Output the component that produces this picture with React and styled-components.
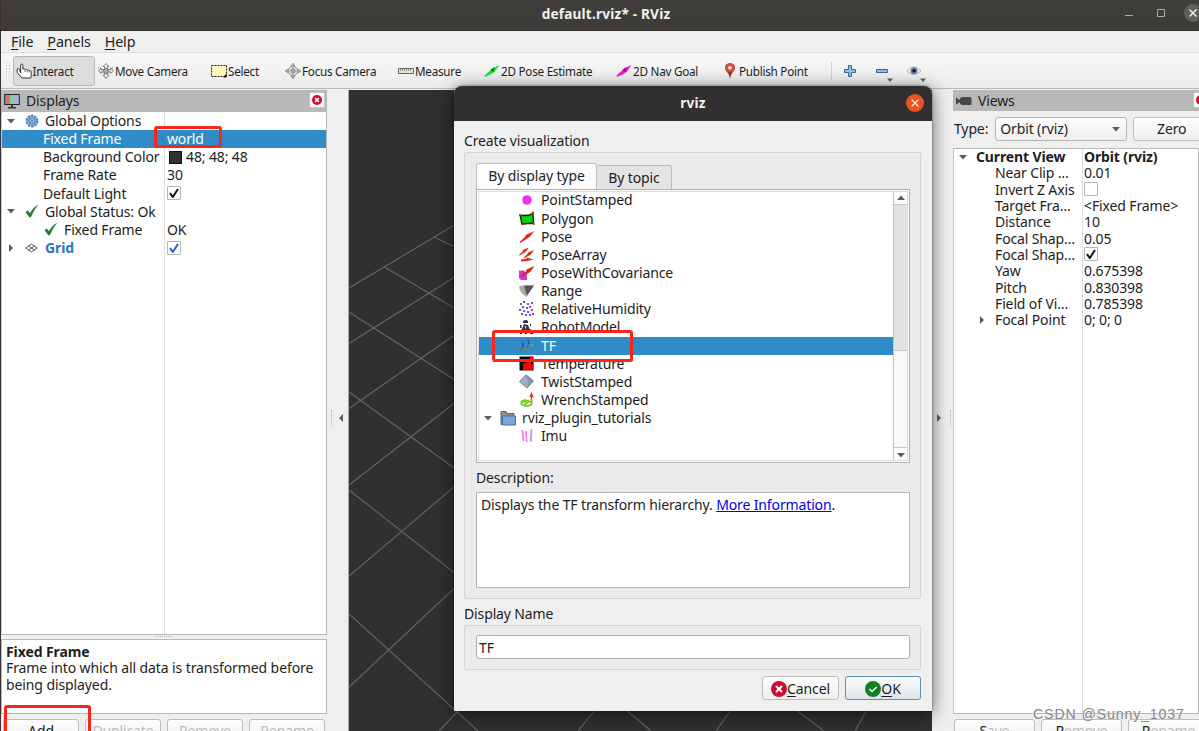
import React from 'react';
import styled, { createGlobalStyle } from 'styled-components';

const Global = createGlobalStyle`
  *{box-sizing:border-box}
  body{margin:0;overflow:hidden;background:#efefef}
  svg{display:block;flex:none}
`;

const Window = styled.div`
  position:relative;width:1199px;height:731px;overflow:hidden;display:flex;flex-direction:column;
  background:#efefef;color:#1d1d1d;font-family:"Noto Sans","Open Sans",sans-serif;font-size:14px;line-height:16px;letter-spacing:-0.13px;white-space:nowrap;
  border-left:1px solid #3a3038;
`;
const TitleBar = styled.div`
  height:31px;flex:none;background:linear-gradient(#413f3c,#3d3b38);border-bottom:1px solid #2f2d2b;display:grid;grid-template-columns:130px 1fr 118px;align-items:center;padding-bottom:3px;
  color:#f2f1ef;font-weight:700;font-size:13.6px;text-align:center;letter-spacing:.2px;
`;
const WindowButtons = styled.div`display:flex;justify-content:flex-end;margin-right:-4px;padding-bottom:1px;`;
const MenuBar = styled.div`
  height:22px;flex:none;display:flex;gap:14px;padding:1px 0 0 10px;align-items:center;border-bottom:1px solid #dcdcdc;font-size:14.3px;
`;
const Mnemonic = styled.span`text-decoration:underline;text-underline-offset:2px;text-decoration-thickness:1px;`;
const Toolbar = styled.div`
  height:36px;flex:none;display:flex;align-items:center;background:linear-gradient(#f8f8f8,#ececec);border-bottom:1px solid #b9b9b9;font-size:11.7px;padding-left:4px;letter-spacing:-0.25px;
`;
const Tool = styled.div`
  width:${p => p.$w}px;height:${p => (p.$on ? 30 : 28)}px;display:flex;flex:none;align-items:center;gap:${p => (p.$on ? 1 : 1.5)}px;padding-left:2.5px;
  ${p => p.$on && 'background:#dcdcdc;border:1px solid #b8b8b8;border-radius:3px;padding-left:1.5px;'}
`;
const Separator = styled.div`width:1px;height:18px;background:#d3d3d3;margin-left:${p => p.$ml || 0}px;`;
const IconTool = styled.div`width:31.5px;height:28px;display:flex;align-items:center;flex:none;margin-left:${p => p.$ml || 0}px;`;
const DropHint = styled.span`align-self:flex-end;display:flex;margin:0 0 2px -1px;`;
const Main = styled.div`flex:1;min-height:0;display:grid;grid-template-columns:326px 21px 584px 21px 246px;`;
const Dock = styled.div`display:flex;flex-direction:column;min-width:0;`;
const DockTitle = styled.div`
  height:21px;margin-top:1px;flex:none;background:#b8b8b8;display:flex;align-items:center;padding:0 2px 0 3px;gap:6px;font-size:14px;
`;
const DockClose = styled.div`
  width:16px;height:16px;border-radius:2px;border:1px solid #c8c8c8;background:#f7f7f7;margin-left:auto;margin-right:${p => p.$mr || 0}px;margin-bottom:2px;display:grid;place-items:center;flex:none;
`;
const Tree = styled.div`
  flex:none;height:${p => p.$h}px;background:linear-gradient(90deg,transparent ${p => p.$col}px,#dedede ${p => p.$col}px,#dedede ${p => p.$col + 1}px,transparent ${p => p.$col + 1}px),#fff;
  border:1px solid #b9b9b9;border-left-color:#c9c9c9;
`;
const TreeRow = styled.div`
  height:${p => p.$h}px;line-height:16px;display:grid;grid-template-columns:${p => p.$col}px 1fr;align-items:center;
  font-weight:${p => (p.$bold ? 700 : 400)};color:${p => (p.$sel ? '#fff' : '#1d1d1d')};background:${p => (p.$sel ? '#308cc6' : 'transparent')};
`;
const NameCell = styled.div`display:flex;align-items:center;padding-left:${p => p.$pad}px;color:${p => (p.$blue ? '#2a76c6' : 'inherit')};`;
const ArrowSlot = styled.span`width:${p => p.$w}px;display:flex;flex:none;margin-bottom:1px;`;
const ValueCell = styled.div`padding-left:${p => (p.$box ? 2 : 3)}px;display:flex;align-items:center;gap:4px;`;
const Swatch = styled.span`width:13px;height:13px;background:#303030;border:1px solid #111;margin-left:2px;`;
const CheckBox = styled.span`width:14px;height:14px;border:1px solid #b7b7b7;background:#fff;display:grid;place-items:center;border-radius:1px;margin-bottom:1px;`;
const Grip = styled.div`width:17px;margin:0 auto;border-bottom:1px dotted #b0b0b0;height:2px;flex:none;`;
const Help = styled.div`
  height:75px;margin-top:2px;border:1px solid #b9b9b9;background:#fff;padding:4px 4px;line-height:16.3px;flex:none;letter-spacing:-0.1px;
`;
const Buttons = styled.div`display:grid;grid-template-columns:${p => p.$cols};gap:6px;padding:${p => p.$pad};`;
const Button = styled.div`
  height:24px;border:1px solid ${p => (p.$focus ? '#5b93b5' : '#bcbcbc')};border-radius:3px;display:flex;align-items:center;justify-content:center;
  background:${p => (p.$focus ? 'linear-gradient(#fbfdfe,#dde5ea)' : 'linear-gradient(#fdfdfd,#efefef)')};color:${p => (p.$off ? '#bcbcbc' : '#1d1d1d')};
`;
const DarkLead = styled.span`color:#1d1d1d;`;
const Splitter = styled.div`
  display:flex;align-items:center;gap:${p => (p.$left ? 5 : 7)}px;padding:4px 0 0 ${p => (p.$left ? 4 : 3)}px;
`;
const Dots = styled.span`width:1px;height:16px;border-left:1px dotted #b5b5b5;`;
const Viewport = styled.div`background:#303030;overflow:hidden;border-left:1px solid #aaa;margin-top:1px;`;
const TypeRow = styled.div`display:flex;align-items:center;gap:6px;height:37px;padding:0 0 2px 1px;flex:none;`;
const Select = styled.div`
  width:132px;height:24px;flex:none;margin-left:1px;border:1px solid #b5b5b5;border-radius:3px;background:linear-gradient(#fdfdfd,#efefef);display:flex;align-items:center;justify-content:space-between;padding:0 6px 0 4px;
`;
const ZeroButton = styled(Button)`width:77px;flex:none;`;

const Dialog = styled.div`
  position:absolute;left:453px;top:86px;width:478px;height:625px;background:#efefef;border-radius:8px 8px 0 0;
  box-shadow:0 3px 18px rgba(0,0,0,.6),0 0 2px rgba(0,0,0,.6);display:flex;flex-direction:column;
`;
const DialogTitle = styled.div`
  height:35px;flex:none;background:#322f30;border-radius:8px 8px 0 0;color:#f2f1ef;font-weight:700;font-size:13.6px;letter-spacing:.2px;
  display:grid;grid-template-columns:26px 1fr 26px;align-items:center;text-align:center;padding-bottom:1px;
`;
const DialogBody = styled.div`padding:10px 11px 0 10px;display:flex;flex-direction:column;`;
const Label = styled.div`height:19px;line-height:19px;margin-top:${p => p.$mt || 0}px;margin-bottom:${p => p.$mb || 0}px;`;
const Group = styled.div`
  height:${p => p.$h}px;border:1px solid #d4d4d4;background:#ebebeb;border-radius:2px;padding:${p => p.$pt}px 10px 0 11px;margin-top:2px;display:flex;flex-direction:column;
`;
const Tabs = styled.div`display:flex;align-items:flex-end;height:26px;flex:none;`;
const Tab = styled.div`
  height:${p => (p.$on ? 26 : 24)}px;width:${p => (p.$on ? 121 : 75)}px;text-align:center;line-height:${p => (p.$on ? 24 : 23)}px;
  border:1px solid #bdbdbd;border-bottom:0;border-radius:3px 3px 0 0;background:${p => (p.$on ? '#fdfdfd' : '#e4e4e4')};${p => !p.$on && 'border-left:0;'}
`;
const ListBox = styled.div`
  height:274px;flex:none;display:flex;border:1px solid #b0b0b0;outline:1px solid #dcdcdc;outline-offset:-3px;background:#fff;padding:1px 2px 1px 1px;
`;
const List = styled.div`flex:1;padding-top:.4px;`;
const Item = styled.div`
  height:18.15px;line-height:16px;display:flex;align-items:center;padding-left:${p => p.$pad}px;gap:6px;
  background:${p => (p.$sel ? '#308cc6' : 'transparent')};color:${p => (p.$sel ? '#fff' : '#1d1d1d')};
`;
const Scroll = styled.div`width:14px;display:flex;flex-direction:column;border-left:1px solid #c4c4c4;background:#e2e2e2;`;
const ScrollEnd = styled.div`height:13px;background:#fbfbfb;display:grid;place-items:center;`;
const ScrollTrack = styled.div`height:146px;border-top:1px solid #c4c4c4;`;
const ScrollThumb = styled.div`flex:1;background:#f8f8f8;border:1px solid #c4c4c4;border-left:0;border-right:0;`;
const Description = styled.div`height:96px;border:1px solid #b5b5b5;background:#fff;padding:3px 4px;flex:none;line-height:18px;`;
const Link = styled.span`color:#0000ee;text-decoration:underline;`;
const Field = styled.div`height:24px;border:1px solid #b0b0b0;border-radius:3px;background:#fff;padding-left:2px;line-height:23px;`;
const Actions = styled.div`display:flex;justify-content:flex-end;gap:6px;margin-top:6px;`;
const ActionButton = styled(Button)`width:${p => (p.$focus ? 76 : 77)}px;padding-top:1px;`;
const Mark = styled.div`
  position:absolute;left:${p => p.$x}px;top:${p => p.$y}px;width:${p => p.$w}px;height:${p => p.$h}px;border:3px solid #fb2519;border-radius:3px;
`;
const Watermark = styled.div`
  position:absolute;left:1032px;top:705px;font:14.2px/18px "Liberation Sans",Arial,sans-serif;letter-spacing:.85px;color:#858585;text-shadow:0 0 1px #fff;
`;

const Arrow = ({ dir = 'down', size = 8 }) => (
  <svg width={size} height={size} viewBox="0 0 8 8"><path fill="#5c5c5c" d={{ down: 'M0 2h8L4 6.5z', right: 'M2 0v8l4-4z', left: 'M6 0v8L2 4z', up: 'M0 6h8L4 1.5z' }[dir]} /></svg>
);
const Check = ({ color = '#111' }) => (
  <svg width="10" height="10" viewBox="0 0 10 10"><path d="M1 5.2 3.8 9 9 1" fill="none" stroke={color} strokeWidth="2" /></svg>
);
const RoundX = ({ size = 10, bg = '#c8102e' }) => (
  <svg width={size} height={size} viewBox="0 0 16 16"><circle cx="8" cy="8" r="8" fill={bg} /><path d="m5 5 6 6m0-6-6 6" stroke="#fff" strokeWidth={size < 12 ? 2.4 : size > 16 ? 1.1 : 2} /></svg>
);
const Ico = ({ w = 16, h = 16, children }) => <svg width={w} height={h} viewBox="0 0 16 16">{children}</svg>;
const Pose = ({ c, d }) => <Ico><path d="M.5 12.500 1 14 7 11.300l3.500-2.300L15.500 2 9 5 5 8.500z" fill={c} /><path d="m6.500 7 4-3-1 5z" fill={d} /></Ico>;
const Diagonal = ({ x, y, s }) => <g transform={`translate(${x} ${y}) scale(${s})`}><path d="M0 11 5.500 6l1-2.500L15 0 10.500 6.500 8 8 .8 12.300z" fill="#e32616" /></g>;

const icons = {
  hand: <Ico><path d="M4.700 10V2.200c0-1.600 2.200-1.600 2.200 0v3.900c1.200-.6 1.800-.2 2.200.5 1-.5 1.700-.2 2.100.5 1-.4 1.800 0 2.100.7 1.300-.3 1.900.3 1.900 1.200V14q0 1-1 1H6L1.200 9.500V6.200C1.800 5 3 5.200 3.300 6.500z" fill="#fff" stroke="#333" /><path d="M9 7v2M11.200 7.400v1.800M13.200 8v1.500" stroke="#555" strokeWidth=".8" /></Ico>,
  move: <Ico><path d="m8 .5 3 3H9.500v3H13V5l2.500 2.700L13 10.300V9H9.500v3H11l-3 3.500L5 12h1.500V9H3v1.500L.5 7.800 3 5v1.500h3.500v-3H5z" fill="#e8e8e8" stroke="#808080" /><circle cx="8" cy="8" r="2.500" fill="#aaa" stroke="#777" /><path d="M0 5h4M12 5h4" stroke="#777" strokeDasharray="1 1" /></Ico>,
  select: <Ico><path d="M.5 2.500h15v11H.5z" fill="#fff7b8" stroke="#222" strokeDasharray="2 1" /><path d="m12 14.500 3.500-4v4z" fill="#111" /></Ico>,
  focus: <Ico><circle cx="8" cy="8" r="4.700" fill="#ddd" stroke="#888" /><circle cx="8" cy="8" r="2" fill="#aaa" stroke="#888" /><path d="m8 0 2 3H6zM8 16l2-3H6zM0 8l3-2v4zM16 8l-3-2v4zM8 3v3M8 10v3M3 8h3M10 8h3" fill="#aaa" stroke="#999" strokeWidth=".8" /></Ico>,
  measure: <Ico><path d="M.5 5.500h15v5H.5z" fill="#f0e6bb" stroke="#666" /><path d="M2.500 6v2M4.500 6v2M6.500 6v2M8.500 6v2M10.500 6v2M12.500 6v2" stroke="#777" strokeWidth=".8" /></Ico>,
  estimate: <Pose c="#17e43d" d="#08751c" />,
  goal: <Pose c="#f513d8" d="#8e087c" />,
  pin: <Ico><path d="M8 15.800Q7.500 12 5 9 2.800 6.300 3 4.500C3.400 1.500 5.400.2 8 .2s4.600 1.300 5 4.300q.2 1.800-2 4.500Q8.500 12 8 15.800z" fill="#94452b" /><path d="M3 4.500C3.400 1.500 5.400.2 8 .2s4.600 1.300 5 4.300q0 2-2 4H5q-2-2-2-4z" fill="#dc4c35" /><circle cx="8" cy="4.800" r="1.900" fill="#f6e9e6" /></Ico>,
  plus: <svg width="12" height="12" viewBox="0 0 12 12"><path d="M4.500.5h3v4h4v3h-4v4h-3v-4h-4v-3h4z" fill="#94bce4" stroke="#3465a4" /></svg>,
  minus: <svg width="12" height="12" viewBox="0 0 12 12"><path d="M.5 4.500h11v3H.5z" fill="#94bce4" stroke="#3465a4" /></svg>,
  eye: <Ico w={14}><path d="M0 8Q8-1.500 16 8 8 16 0 8z" fill="#f4f4f4" stroke="#aaa" /><circle cx="8" cy="7.700" r="4" fill="#6b79b3" /><circle cx="8" cy="7.700" r="2" fill="#14172e" /></Ico>,
  monitor: <svg width="16" height="16" viewBox="0 0 16 16"><path d="M.2 1h15.600v11H.2z" fill="#222" /><path d="M1.200 2H6v9H1.200z" fill="#c77" /><path d="M6 2h4v9H6z" fill="#86d186" /><path d="M10 2h4.800v9H10z" fill="#aab0ee" /><path d="M7 12h2v2h3v1.500H4V14h3z" fill="#333" /></svg>,
  camera: <svg width="16" height="10" viewBox="0 0 16 10"><path d="M0 1.500 4 4V2.500L6 1h8q1.500 0 1.500 1.500v5Q15.500 9 14 9H6L4 7.500V6L0 8.500z" fill="#484848" /></svg>,
  gear: <svg width="14" height="14" viewBox="0 0 14 14"><circle cx="7" cy="7" r="5.500" fill="#8fb3df" stroke="#4a7ebb" strokeWidth="1.800" strokeDasharray="2.400 1.050" /><circle cx="7" cy="7" r="3.200" fill="#b9d0ec" stroke="#4a7ebb" /><path d="M7 3v8M3 7h8M4 4l6 6M10 4l-6 6" stroke="#5c8cc6" strokeWidth=".7" /></svg>,
  ok: <svg width="14" height="14" viewBox="0 0 14 14"><path d="m.5 8 2.300-1.600L5 9.200Q8 3.500 13.300.5 8.800 6 5.800 13.300H4.300z" fill="#227d2b" /></svg>,
  grid: <svg width="13" height="10" viewBox="0 0 13 10"><path d="M.7 5 6.500 1l5.800 4-5.800 4zM3.500 3l6 4M9.500 3l-6 4" fill="none" stroke="#555" /></svg>,
  PointStamped: <Ico><circle cx="8" cy="8" r="4.800" fill="#f032ed" /></Ico>,
  Polygon: <Ico><path d="M1.200 4.500 10 4.300l4-2.300.5 10.500-4-.3-7.500 1z" fill="#08d408" stroke="#122b12" strokeWidth="1.400" /><path d="M0 3h2v2H0zM13 .5h2v2h-2zM2 12.500h2v1.500H2zM14 12h1.500v2H14z" fill="#f22" /></Ico>,
  Pose: <Ico><path d="M.5 13 6 8l.8-2L15.500 2 10.500 8 8.500 9.200 1.300 14z" fill="#e32616" /></Ico>,
  PoseArray: <Ico><Diagonal x={0} y={.5} s={.65} /><Diagonal x={4.500} y={3} s={.7} /><path d="m2 12.500 5-.5 1-1.500 6.500 2-6.500 1.500-6 .5z" fill="#e32616" /></Ico>,
  PoseWithCovariance: <Ico><path d="M0 5.500h5l3 3v6.500H2L0 13z" fill="#cc39cc" /><Diagonal x={2} y={1} s={.9} /></Ico>,
  Range: <Ico><path d="M0 4Q1 2 4 2.500L15 2.500 7.500 14Q1 10 0 4z" fill="#aaa" /><path d="m5 2.500 10 0L8 12.500z" fill="#555" /></Ico>,
  RelativeHumidity: <Ico>{[[2, 3], [5, 1], [9, 3], [13, 2], [4, 6], [8, 7], [11, 6], [1, 9], [5, 10], [13, 9], [9, 11], [3, 13], [7, 14], [11, 14], [14, 13]].map(([x, y]) => <circle key={`${x}-${y}`} cx={x} cy={y} r="1.100" fill="#5520ee" />)}</Ico>,
  RobotModel: <Ico><path d="M4 2q3-2 5 0v2H4z" fill="#24345d" /><path d="m5 5 4 1 1.500 4 4 1.500V15h-3l-2-2-2 2H6l-2-3-1 3H1v-3l2-2zM1 6h1.500v3H1zM11 5h1v2h-1z" fill="#333" /><path d="m5.500 7 2 .5-1 3z" fill="#ddd" /></Ico>,
  TF: <Ico><path d="m0 14 4-4" stroke="#8a5560" strokeWidth="1.500" /><path d="M4 10V4M10 7 9 1" stroke="#2949c4" strokeWidth="1.500" /><path d="m4 10 5 2M10 7h5" stroke="#26ca64" strokeWidth="1.300" /><path d="m6 12 4-5" stroke="#a55b45" strokeWidth="1.300" /></Ico>,
  Temperature: <Ico><path d="M.5.500h14v14H.5z" fill="#090909" /><path d="M4 14V8l2-1.500h2V5l4-1v5l2.500-1v6zM11 .5h3V3h-3z" fill="#f00" /></Ico>,
  TwistStamped: <Ico><path d="M7 .8 14.500 7l-6.500 7L.5 7.500z" fill="#8999b4" stroke="#63728e" strokeWidth=".8" /><path d="m1 7.500 6-6L9 8l-1 5.500z" fill="#b6c0d2" opacity=".6" /></Ico>,
  WrenchStamped: <Ico><path d="M12.500 11V3M11.200 4.500l1.300-3 1.300 3z" stroke="#e23b28" strokeWidth="1.300" fill="#e23b28" /><path d="M12.500 7v5.500Q9 15 5 13.500M2 10.500Q4 7 8 8.500t4 2" stroke="#6cc414" strokeWidth="1.600" fill="none" /><path d="M2 11q3-2.500 7-.5L5 13.500q-3 0-3-2.500z" stroke="#6cc414" strokeWidth="1.200" fill="#c4e6a0" /></Ico>,
  Imu: <Ico><path d="m3.500 2 1 11M7 3l.7 11M12.500 1l-.7 13" stroke="#ee82e8" strokeWidth="1.800" /></Ico>,
  folder: <Ico><path d="M1 14.500v-13h5l1 2h7v11z" fill="#8a9299" stroke="#5b646b" /><path d="M2.500 6h13v9h-13z" fill="#7da7d9" stroke="#3e6ea8" /></Ico>,
};

const tools = [['hand', 'Interact', 82, true], ['move', 'Move Camera', 113], ['select', 'Select', 74], ['focus', 'Focus Camera', 113], ['measure', 'Measure', 86], ['estimate', '2D Pose Estimate', 132], ['goal', '2D Nav Goal', 106], ['pin', 'Publish Point', 108]];
const displays = [
  { n: 'Global Options', icon: 'gear', arrow: 'down', pad: 5, iw: 20 },
  { n: 'Fixed Frame', v: 'world', pad: 41, sel: true },
  { n: 'Background Color', v: '48; 48; 48', pad: 41, swatch: true },
  { n: 'Frame Rate', v: '30', pad: 41 },
  { n: 'Default Light', pad: 41, check: '#111' },
  { n: 'Global Status: Ok', icon: 'ok', arrow: 'down', pad: 5, iw: 20 },
  { n: 'Fixed Frame', v: 'OK', icon: 'ok', pad: 42, iw: 20 },
  { n: 'Grid', icon: 'grid', arrow: 'right', pad: 5, iw: 20, blue: true, check: '#2a66b0' },
];
const views = [
  ['Near Clip …', '0.01'], ['Invert Z Axis', null, false], ['Target Fra…', '<Fixed Frame>'], ['Distance', '10'], ['Focal Shap…', '0.05'],
  ['Focal Shap…', null, true], ['Yaw', '0.675398'], ['Pitch', '0.830398'], ['Field of Vi…', '0.785398'],
];
const types = ['PointStamped', 'Polygon', 'Pose', 'PoseArray', 'PoseWithCovariance', 'Range', 'RelativeHumidity', 'RobotModel', 'TF', 'Temperature', 'TwistStamped', 'WrenchStamped'];

function GridLines() {
  return (
    <svg width="583" height="641" viewBox="349 90 583 641">
      <g stroke="#656565" strokeWidth="1.100">
        <path d="M349 288 461 221M349 343.500 461 273M349 408.500 461 330.500M349 485 461 398M349 576 461 481M349 687 461 582M439 731 461 708" />
        <path d="m434 237 27 13M384.500 267 461 312M349 312 461 384M349 392 461 473M349 490 461 578M349 614 478 731" />
        <path d="m578 731 17-21M626 710l25 21M716 731l15-21M796 710l28 21M855 731l12-21" />
      </g>
    </svg>
  );
}

export default function App() {
  return (
    <Window>
      <Global />
      <TitleBar>
        <span /><span>default.rviz* - RViz</span>
        <WindowButtons><svg width="78" height="20" viewBox="0 0 78 20"><path d="M0 12.500h8" stroke="#aaa" /><path d="M32.500 6.500h7v7h-7z" fill="none" stroke="#aaa" /><circle cx="68" cy="10" r="9" fill="#62605e" /><path d="m64.500 6.500 7 7m0-7-7 7" stroke="#eee" strokeWidth="1.500" /></svg></WindowButtons>
      </TitleBar>
      <MenuBar>{['File', 'Panels', 'Help'].map(m => <span key={m}><Mnemonic>{m[0]}</Mnemonic>{m.slice(1)}</span>)}</MenuBar>
      <Toolbar>
        <svg width="8" height="18" viewBox="0 0 8 18"><path d="M1.500 0v18M4.500 0v18" stroke="#c9c9c9" strokeDasharray="1 2" /></svg>
        {tools.map(([i, n, w, on]) => <Tool key={n} $w={w} $on={on}>{icons[i]}{n}</Tool>)}
        <Separator $ml={4} />
        <IconTool $ml={12}>{icons.plus}</IconTool>
        <IconTool>{icons.minus}<DropHint><Arrow size={6} /></DropHint></IconTool>
        <IconTool>{icons.eye}<DropHint><Arrow size={6} /></DropHint></IconTool>
      </Toolbar>
      <Main>
        <Dock>
          <DockTitle>{icons.monitor}Displays<DockClose><RoundX /></DockClose></DockTitle>
          <Tree $h={524} $col={162}>
            {displays.map((r, k) => (
              <TreeRow key={k} $h={18.15} $col={162} $sel={r.sel}>
                <NameCell $pad={r.pad} $blue={r.blue}>
                  {r.arrow && <ArrowSlot $w={18}><Arrow dir={r.arrow} /></ArrowSlot>}
                  {r.icon && <ArrowSlot $w={r.iw}>{icons[r.icon]}</ArrowSlot>}
                  {r.blue ? <b>{r.n}</b> : r.n}
                </NameCell>
                <ValueCell>{r.swatch && <Swatch />}{r.check && <CheckBox><Check color={r.check} /></CheckBox>}{r.v}</ValueCell>
              </TreeRow>
            ))}
          </Tree>
          <Grip />
          <Help><b>Fixed Frame</b><br />Frame into which all data is transformed before<br />being displayed.</Help>
          <Buttons $cols="repeat(4,76px)" $pad="5px 0 0 2px"><Button>Add</Button><Button $off>Duplicate</Button><Button $off>Remove</Button><Button $off>Rename</Button></Buttons>
        </Dock>
        <Splitter $left><Dots /><Arrow dir="left" /></Splitter>
        <Viewport><GridLines /></Viewport>
        <Splitter><Arrow dir="right" /><Dots /></Splitter>
        <Dock>
          <DockTitle>{icons.camera}Views<DockClose $mr={-12}><RoundX /></DockClose></DockTitle>
          <TypeRow>Type:<Select>Orbit (rviz)<Arrow /></Select><ZeroButton>Zero</ZeroButton></TypeRow>
          <Tree $h={566} $col={128}>
            <TreeRow $h={16.3} $col={128} $bold><NameCell $pad={5}><ArrowSlot $w={17}><Arrow /></ArrowSlot>Current View</NameCell><ValueCell $box>Orbit (rviz)</ValueCell></TreeRow>
            {views.map(([n, v, c], k) => <TreeRow key={k} $h={16.3} $col={128}><NameCell $pad={41}>{n}</NameCell><ValueCell $box>{v ?? <CheckBox>{c && <Check />}</CheckBox>}</ValueCell></TreeRow>)}
            <TreeRow $h={16.3} $col={128}><NameCell $pad={24}><ArrowSlot $w={17}><Arrow dir="right" /></ArrowSlot>Focal Point</NameCell><ValueCell $box>0; 0; 0</ValueCell></TreeRow>
          </Tree>
          <Buttons $cols="repeat(3,81px)" $pad="5px 0 0 1px">{['Save', 'Remove', 'Rename'].map(b => <Button key={b} $off><DarkLead>{b[0]}</DarkLead>{b.slice(1)}</Button>)}</Buttons>
        </Dock>
      </Main>
      <Dialog>
        <DialogTitle><span /><span>rviz</span><RoundX size={18} bg="#e95420" /></DialogTitle>
        <DialogBody>
          <Label>Create visualization</Label>
          <Group $h={447} $pt={10}>
            <Tabs><Tab $on>By display type</Tab><Tab>By topic</Tab></Tabs>
            <ListBox>
              <List>
                {types.map(t => <Item key={t} $pad={41} $sel={t === 'TF'}>{icons[t]}{t}</Item>)}
                <Item $pad={6}><ArrowSlot $w={10}><Arrow /></ArrowSlot>{icons.folder}rviz_plugin_tutorials</Item>
                <Item $pad={41}>{icons.Imu}Imu</Item>
              </List>
              <Scroll><ScrollEnd><Arrow dir="up" /></ScrollEnd><ScrollTrack /><ScrollThumb /><ScrollEnd><Arrow /></ScrollEnd></Scroll>
            </ListBox>
            <Label $mt={5} $mb={5}>Description:</Label>
            <Description>Displays the TF transform hierarchy. <Link>More Information</Link>.</Description>
          </Group>
          <Label $mt={5}>Display Name</Label>
          <Group $h={45} $pt={9}><Field>TF</Field></Group>
          <Actions><ActionButton><RoundX size={16} /><span><Mnemonic>C</Mnemonic>ancel</span></ActionButton>
            <ActionButton $focus><Ico><circle cx="8" cy="8" r="8" fill="#138024" /><path d="m4.500 8 2.500 2.500 4.700-4.500" fill="none" stroke="#fff" strokeWidth="1.600" /></Ico><span><Mnemonic>O</Mnemonic>K</span></ActionButton></Actions>
        </DialogBody>
      </Dialog>
      <Mark $x={153} $y={126} $w={68} $h={22} />
      <Mark $x={491} $y={330} $w={141} $h={32} />
      <Mark $x={3} $y={705} $w={87} $h={40} />
      <Watermark>CSDN @Sunny_1037</Watermark>
    </Window>
  );
}
